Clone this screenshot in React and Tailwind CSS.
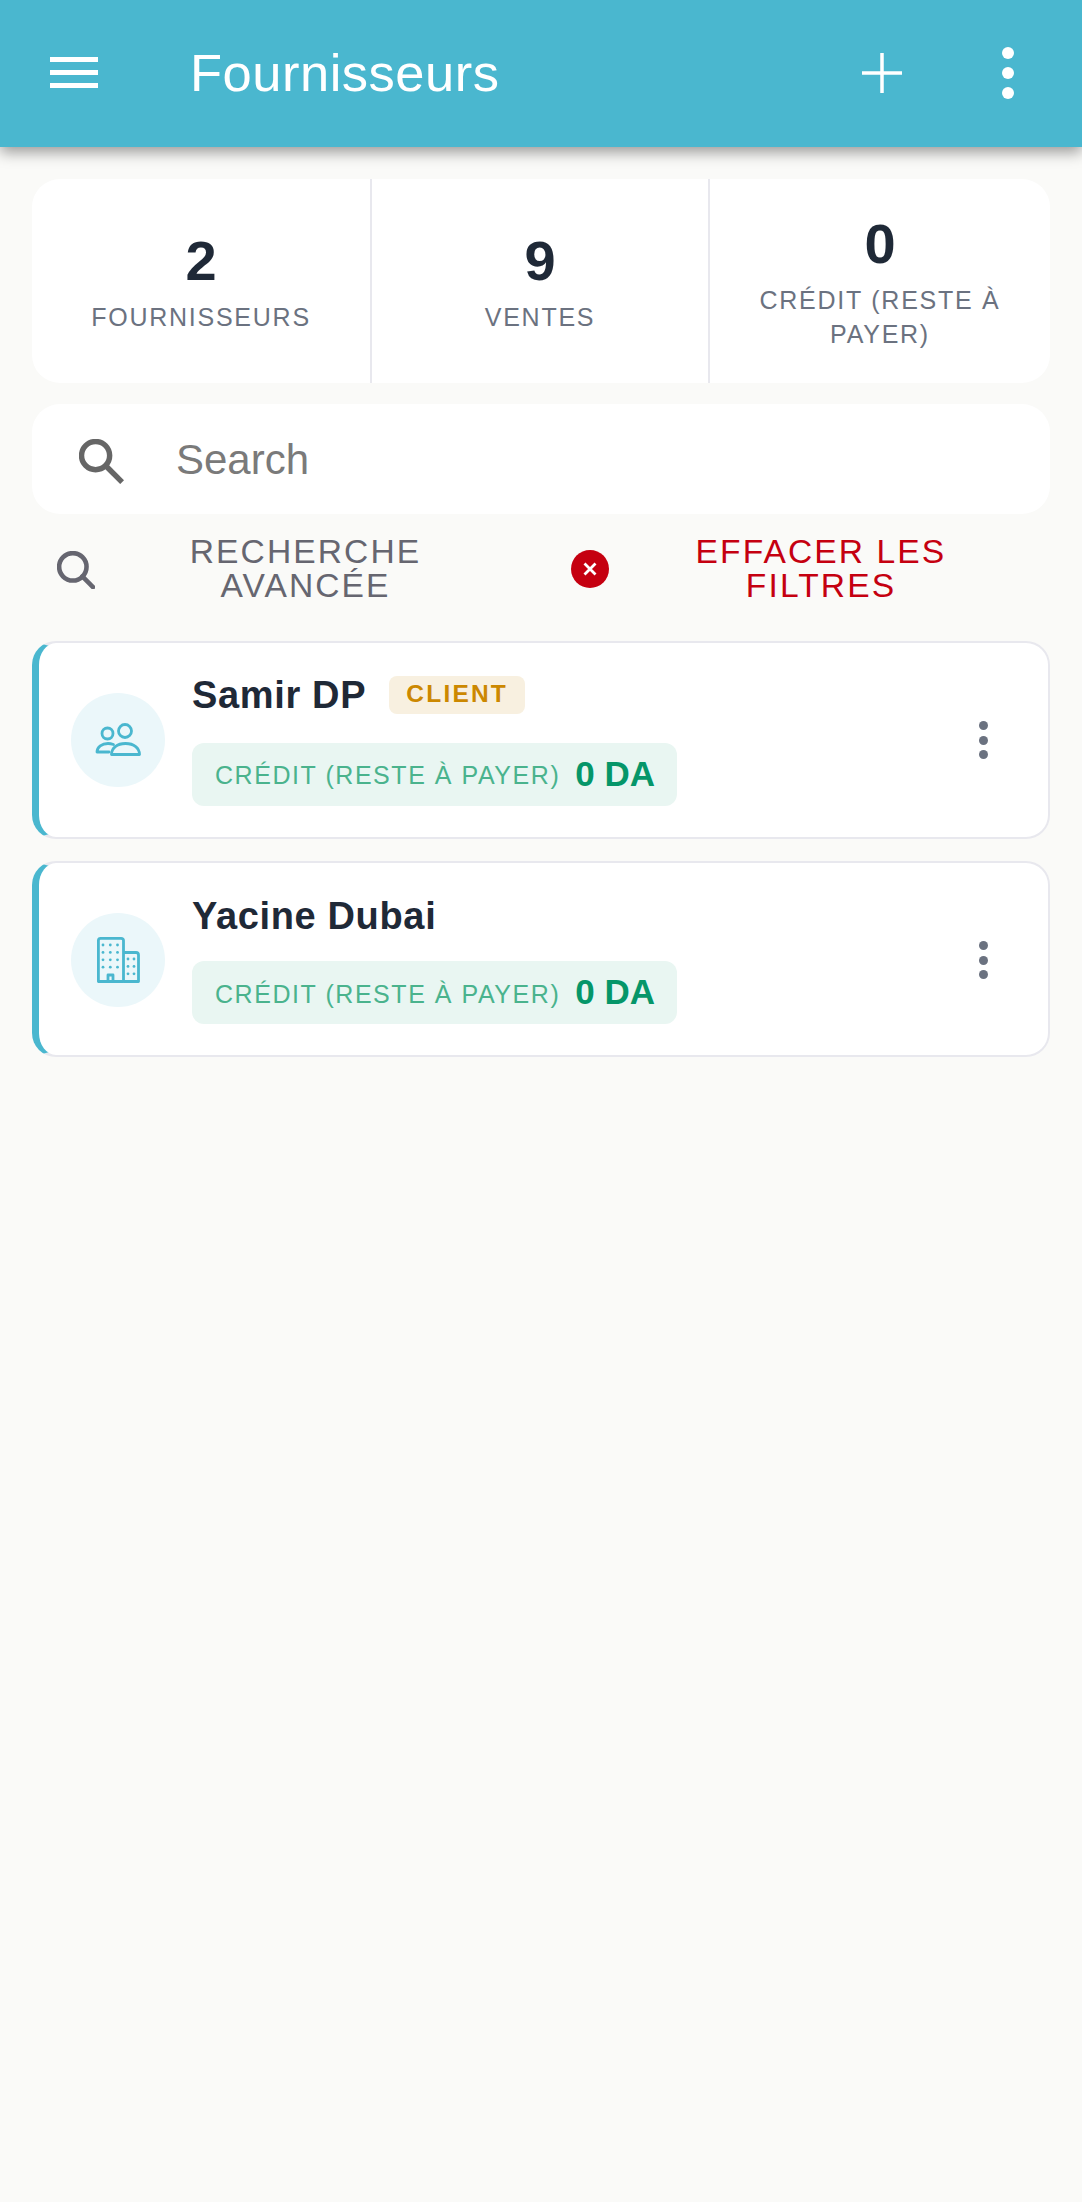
import React from "react";

const SearchIcon = ({ size, color, sw, c, r, from, to, cap, className }) => (
  <svg width={size} height={size} viewBox="0 0 48 48" fill="none" className={`shrink-0 ${className}`}>
    <circle cx={c} cy={c} r={r} stroke={color} strokeWidth={sw} />
    <path d={`M${from} ${from} L${to} ${to}`} stroke={color} strokeWidth={sw} strokeLinecap={cap} />
  </svg>
);

const UsersIcon = () => (
  <svg width="46" height="34" viewBox="0 0 46 34" fill="none" stroke="#4ab7cf" strokeWidth="2.8" strokeLinejoin="round" strokeLinecap="round">
    <circle cx="30" cy="8" r="6.5" />
    <circle cx="12.5" cy="10.5" r="5.5" />
    <path d="M16.5 31.5C16.5 25 22 20.5 30.5 20.5C39 20.5 44.5 25 44.5 31.5Z" />
    <path d="M14 29H2C2 24 7 20.5 13 20.5C15 20.5 17 21 18.5 21.5" />
  </svg>
);

const BuildingIcon = () => {
  const big = [];
  for (let y = 8; y <= 37; y += 7.4) for (const x of [6, 13.3, 20.5]) if (!(x === 13.3 && y > 36)) big.push([x, y]);
  const small = [];
  for (let y = 22; y <= 37; y += 7.4) for (const x of [31, 37]) small.push([x, y]);
  return (
    <svg width="43" height="46" viewBox="0 0 43 46" fill="none" stroke="#4ab7cf" strokeWidth="2.8" strokeLinejoin="round">
      <path d="M1.4 44.5V3.5C1.4 2 2.2 1.4 3.5 1.4H24C25.5 1.4 26.5 2 26.5 3.5V44.5Z" />
      <path d="M26.5 15.5H39C40.5 15.5 41.5 16.5 41.5 18V44.5H26.5" />
      <path d="M11 44.5V38H16V44.5" />
      {[...big, ...small].map(([x, y], i) => (
        <circle key={i} cx={x} cy={y} r="1.4" fill="#4ab7cf" stroke="none" />
      ))}
    </svg>
  );
};

const Stat = ({ value, label, className }) => (
  <div className={`flex flex-col items-center justify-center text-center px-6 pt-[1px] ${className}`}>
    <div className="text-[56px] leading-[62px] font-bold text-[#1f2937]">{value}</div>
    <div className="text-[25px] leading-[34px] tracking-[1.75px] text-[#6b7280] mt-[8px]">{label}</div>
  </div>
);

const Dots = () => (
  <div className="flex flex-col gap-[5.5px] shrink-0 mr-[60px]">
    <span className="w-[9px] h-[9px] rounded-full bg-[#6b7280]" />
    <span className="w-[9px] h-[9px] rounded-full bg-[#6b7280]" />
    <span className="w-[9px] h-[9px] rounded-full bg-[#6b7280]" />
  </div>
);

const Card = ({ name, badge, icon, chipMt, h }) => (
  <div className={`relative flex items-center bg-white rounded-[24px] border-2 border-[#e8e8ee] border-l-[7px] border-l-[#4ab7cf] ${h}`}>
    <div className="ml-[32px] w-[94px] h-[94px] rounded-full bg-[#ebf7fa] flex items-center justify-center shrink-0">{icon}</div>
    <div className="ml-[27px] flex-1 min-w-0">
      <div className="flex items-center h-[38px] pt-[2px]">
        <span className="text-[38px] leading-[38px] font-bold text-[#1f2937] tracking-[0.65px]">{name}</span>
        {badge && (
          <span className="ml-[23px] w-[136px] h-[38px] rounded-[8px] bg-[#f8f0e0] text-[#cc8800] font-bold text-[24.5px] tracking-[2.2px] flex items-center justify-center">
            {badge}
          </span>
        )}
      </div>
      <div className={`${chipMt} w-[485px] h-[63px] rounded-[12px] bg-[#e9f6f2] flex items-center pl-[23px]`}>
        <span className="text-[25px] tracking-[1.55px] text-[#4ab38d] pt-[4px]">CRÉDIT (RESTE À PAYER)</span>
        <span className="ml-[15px] text-[35px] font-bold text-[#059669]">0 DA</span>
      </div>
    </div>
    <Dots />
  </div>
);

export default function App() {
  return (
    <div className="min-h-screen bg-[#fafaf8] font-['Liberation_Sans',Arial,sans-serif]">
      <header className="h-[147px] bg-[#4ab7cf] flex items-center shadow-[0_5px_14px_rgba(0,0,0,0.4)] pb-[2px]">
        <div className="ml-[50px] w-[48px] flex flex-col gap-[8.5px]">
          <span className="h-[4.5px] bg-white" />
          <span className="h-[4.5px] bg-white" />
          <span className="h-[4.5px] bg-white" />
        </div>
        <h1 className="ml-[92px] flex-1 text-[52.5px] leading-none text-white font-normal tracking-[0.5px] pt-[2px]">Fournisseurs</h1>
        <svg width="40" height="40" viewBox="0 0 40 40" className="mr-[100px]">
          <path d="M20 0V40M0 20H40" stroke="#fff" strokeWidth="3.5" />
        </svg>
        <div className="flex flex-col gap-[8px] mr-[68px]">
          <span className="w-[12px] h-[12px] rounded-full bg-white" />
          <span className="w-[12px] h-[12px] rounded-full bg-white" />
          <span className="w-[12px] h-[12px] rounded-full bg-white" />
        </div>
      </header>

      <main className="px-[32px] pt-[32px]">
        <section className="h-[204px] bg-white rounded-[28px] flex">
          <Stat value="2" label="FOURNISSEURS" className="w-[340px] border-r-2 border-[#e8e8ee]" />
          <Stat value="9" label="VENTES" className="w-[338px] border-r-2 border-[#e8e8ee]" />
          <Stat value="0" label="CRÉDIT (RESTE À PAYER)" className="flex-1" />
        </section>

        <div className="mt-[21px] h-[110px] bg-white rounded-[28px] flex items-center pl-[47px]">
          <SearchIcon size={45} color="#666666" sw={5.8} c={17.7} r={15} from={28.5} to={46} cap="butt" className="mt-[4px]" />
          <span className="ml-[52px] text-[42px] text-[#7a7a7a]">Search</span>
        </div>

        <div className="mt-[20px] grid grid-cols-2 h-[70px]">
          <div className="flex items-center pl-[25px] pr-[25px]">
            <SearchIcon size={38} color="#666670" sw={5.8} c={20} r={17.3} from={32} to={45.5} cap="round" className="mt-[2px]" />
            <span className="flex-1 text-center text-[33.6px] leading-[34px] tracking-[2.1px] text-[#666670] px-[60px]">RECHERCHE AVANCÉE</span>
          </div>
          <div className="flex items-center pl-[30px] pr-[17px]">
            <svg width="38" height="38" viewBox="0 0 38 38" className="shrink-0">
              <circle cx="19" cy="19" r="19" fill="#c50010" />
              <path d="M13.5 13.5L24.5 24.5M24.5 13.5L13.5 24.5" stroke="#fff" strokeWidth="2.8" />
            </svg>
            <span className="flex-1 text-center text-[33.6px] leading-[34px] tracking-[2.1px] text-[#c50010] px-[60px]">EFFACER LES FILTRES</span>
          </div>
        </div>

        <div className="mt-[37px] flex flex-col gap-[22px]">
          <Card name="Samir DP" badge="CLIENT" icon={<UsersIcon />} chipMt="mt-[30px]" h="h-[198px]" />
          <Card name="Yacine Dubai" icon={<BuildingIcon />} chipMt="mt-[27px]" h="h-[196px] pt-[2px]" />
        </div>
      </main>
    </div>
  );
}
